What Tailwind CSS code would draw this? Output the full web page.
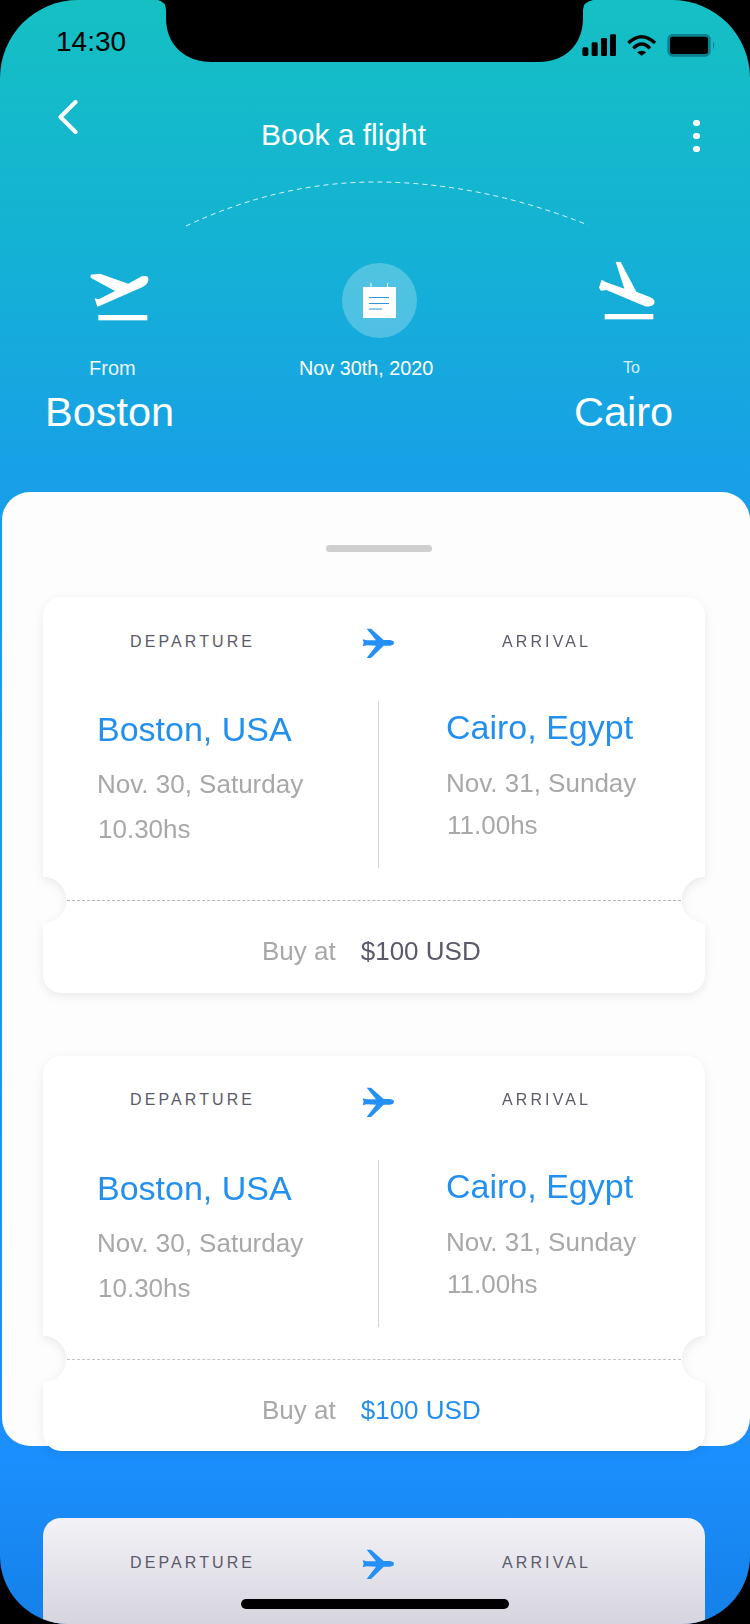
<!DOCTYPE html>
<html lang="en">

<head>
    <meta charset="UTF-8">
    <meta name="viewport" content="width=device-width, initial-scale=1.0">
    <title>Book a flight</title>
    <script src="https://cdn.jsdelivr.net/npm/@tailwindcss/browser@4"></script>
</head>

<body class="bg-black font-['Liberation_Sans',sans-serif] antialiased">

    <div class="relative w-[750px] h-[1624px] overflow-hidden rounded-t-[78px] rounded-b-[68px] bg-[linear-gradient(180deg,#15c0c3_0%,#14b2d4_15%,#189fe8_30%,#1b8ffd_90%,#1580e8_100%)]">

        <!-- notch -->
        <svg class="absolute top-0 left-0" width="750" height="64" viewBox="0 0 750 64">
            <path d="M158 0 Q166 2 166 10 L166 18 C166 45 185 62 212 62 L538 62 C565 62 583 45 583 18 L583 10 Q583 2 593 0 Z" fill="#000" />
        </svg>

        <!-- flight arc -->
        <svg class="absolute top-[178px] left-[180px]" width="412" height="52" viewBox="0 0 412 52" fill="none">
            <path d="M6 48 Q100 4 195 4 Q300 4 408 47" stroke="#fff" stroke-opacity="0.85" stroke-width="1" stroke-dasharray="5 4" />
        </svg>

        <header class="h-[492px]">
            <!-- status bar -->
            <div class="flex pt-[26px] pl-[56px] pr-[33px] h-[57px]">
                <span class="text-[28px] leading-[32px] text-black">14:30</span>
                <svg class="ml-auto mt-[6px]" width="137" height="25" viewBox="615 95 411 75">
                    <rect x="622" y="141" width="18" height="26" rx="5" fill="#000" />
                    <rect x="650" y="126" width="18" height="41" rx="4" fill="#000" />
                    <rect x="678" y="113" width="18" height="54" rx="4" fill="#000" />
                    <rect x="705" y="102" width="18" height="65" rx="4" fill="#000" />
                    <path d="M760 128 Q800 90 840 128" stroke="#000" stroke-width="10" fill="none" />
                    <path d="M775 144 Q800 118 825 144" stroke="#000" stroke-width="10" fill="none" />
                    <path d="M786 156 Q800 146 814 156 L800 166 Z" fill="#000" />
                    <rect x="881" y="105" width="122" height="60" rx="12" stroke="#0d7f8e" stroke-width="8" fill="#000" />
                    <path d="M1014 122 Q1022 135 1014 148 Z" fill="#0d7f8e" />
                </svg>
            </div>

            <!-- title row -->
            <div class="flex mt-[43px] pl-[58px] h-[52px]">
                <svg width="20" height="34" viewBox="0 0 20 34" fill="none">
                    <path d="M17.5 2 L2.5 17 L17.5 32" stroke="#fff" stroke-width="4" stroke-linecap="round" stroke-linejoin="round" />
                </svg>
                <h1 class="ml-[183px] mt-[18px] text-[30px] leading-[34px] text-white">Book a flight</h1>
                <div class="ml-[267px] mt-[20px] flex flex-col gap-[7px]">
                    <span class="block w-[7px] h-[7px] rounded-full bg-white"></span>
                    <span class="block w-[7px] h-[7px] rounded-full bg-white"></span>
                    <span class="block w-[7px] h-[7px] rounded-full bg-white"></span>
                </div>
            </div>

            <!-- route -->
            <div class="flex mt-[108px] pl-[45px] text-white">
                <div class="w-[254px] flex-none">
                    <svg class="ml-[45px] mt-[12px]" width="60" height="50" viewBox="90 95 180 150">
                        <path d="M92 103 L120 100 L205 130 L245 108 Q268 103 265 120 Q263 132 248 140 L120 196 L112 199 L104 174 L116 177 L165 152 L92 112 Z" fill="#fff" />
                        <rect x="115" y="224" width="147" height="16" fill="#fff" />
                    </svg>
                    <p class="ml-[44px] mt-[34px] text-[20px] leading-[24px] text-white/95">From</p>
                    <p class="mt-[9px] text-[41.5px] leading-[46px]">Boston</p>
                </div>
                <div class="w-[275px] flex-none">
                    <div class="ml-[43px] mt-[3px] w-[75px] h-[75px] rounded-full bg-white/25 flex items-center justify-center">
                        <svg width="35" height="37" viewBox="0 0 35 37">
                            <rect x="1" y="5" width="33" height="31" fill="#fff" />
                            <rect x="8.5" y="1" width="1" height="5" fill="#fff" />
                            <rect x="25" y="1" width="1" height="5" fill="#fff" />
                            <rect x="7" y="15" width="20" height="1" fill="#2b96dc" />
                            <rect x="7" y="21" width="20" height="1" fill="#2b96dc" />
                            <rect x="7" y="26.500" width="13" height="1" fill="#2b96dc" />
                        </svg>
                    </div>
                    <p class="mt-[18px] text-[19.8px] leading-[24px] whitespace-nowrap">Nov 30th, 2020</p>
                </div>
                <div class="flex-none">
                    <svg class="ml-[24px]" width="57" height="60" viewBox="175 60 171 180">
                        <path d="M228 65 L243 66 L290 155 L330 171 Q348 178 344 190 Q338 202 316 199 L200 150 L184 152 L178 143 L186 119 L198 126 L254 146 Z" fill="#fff" />
                        <rect x="195" y="222" width="146" height="16" fill="#fff" />
                    </svg>
                    <p class="ml-[49px] mt-[36px] text-[16px] leading-[24px] text-white/80">To</p>
                    <p class="mt-[9px] text-[41.5px] leading-[46px]">Cairo</p>
                </div>
            </div>
        </header>

        <!-- sheet -->
        <main class="ml-[2px] h-[954px] pt-[53px] rounded-[28px] bg-[#fdfdfd]">
            <div class="ml-[324px] mb-[45px] w-[106px] h-[7px] rounded-full bg-[#cfcfcf]"></div>

            <!-- ticket 1 -->
            <div class="ml-[41px] w-[662px] drop-shadow-[0_3px_5px_rgba(0,0,0,0.08)]">
                <article class="h-[396px] rounded-[18px] bg-white [mask-image:radial-gradient(circle_at_0_303px,transparent_23px,black_23.5px),radial-gradient(circle_at_100%_303px,transparent_23px,black_23.5px)] [mask-composite:intersect]">
                    <div class="flex h-[104px] pl-[87px] pt-[33px]">
                        <span class="w-[230px] text-[16px] leading-[24px] tracking-[3.1px] text-[#5b5a6b]">DEPARTURE</span>
                        <svg class="mt-[-3px]" width="35" height="32" viewBox="60 50 105 96">
                            <path d="M80 55 L93 55 L131 89 L150 89 Q162 91 162 97 Q162 104 150 106 L131 106 L93 143 L80 143 L108 106 L80 105 L68 108 L71 97 L68 87 L80 90 L108 90 Z" fill="#2490f5" />
                        </svg>
                        <span class="ml-[107px] text-[16px] leading-[24px] tracking-[3.1px] text-[#5b5a6b]">ARRIVAL</span>
                    </div>
                    <div class="flex h-[167px]">
                        <div class="w-[336px] pl-[54px] pt-[8px] border-r border-[#d4d4d4]">
                            <p class="text-[34px] leading-[40px] text-[#2490ee]">Boston, USA</p>
                            <p class="mt-[19px] text-[26px] leading-[32px] text-[#a8a8a8]">Nov. 30, Saturday</p>
                            <p class="mt-[13px] ml-[1px] text-[26px] leading-[32px] text-[#a8a8a8]">10.30hs</p>
                        </div>
                        <div class="pl-[67px] pt-[6px]">
                            <p class="text-[34px] leading-[40px] text-[#2490ee]">Cairo, Egypt</p>
                            <p class="mt-[20px] text-[26px] leading-[32px] text-[#a8a8a8]">Nov. 31, Sunday</p>
                            <p class="mt-[10px] ml-[1px] text-[26px] leading-[32px] text-[#a8a8a8]">11.00hs</p>
                        </div>
                    </div>
                    <div class="mt-[32px] mx-[24px] border-t border-dashed border-[#b5b5b5]"></div>
                    <div class="flex gap-[25px] mt-[34px] pl-[219px] text-[26px] leading-[32px]">
                        <span class="text-[#a8a8a8]">Buy at</span>
                        <span class="text-[#5b5a6b]">$100 USD</span>
                    </div>
                </article>
            </div>

            <!-- ticket 2 -->
            <div class="mt-[63px] ml-[41px] w-[662px] drop-shadow-[0_3px_5px_rgba(0,0,0,0.08)]">
                <article class="h-[395px] rounded-[18px] bg-white [mask-image:radial-gradient(circle_at_0_303px,transparent_23px,black_23.5px),radial-gradient(circle_at_100%_303px,transparent_23px,black_23.5px)] [mask-composite:intersect]">
                    <div class="flex h-[104px] pl-[87px] pt-[32px]">
                        <span class="w-[230px] text-[16px] leading-[24px] tracking-[3.1px] text-[#5b5a6b]">DEPARTURE</span>
                        <svg class="mt-[-2px]" width="35" height="32" viewBox="60 50 105 96">
                            <path d="M80 55 L93 55 L131 89 L150 89 Q162 91 162 97 Q162 104 150 106 L131 106 L93 143 L80 143 L108 106 L80 105 L68 108 L71 97 L68 87 L80 90 L108 90 Z" fill="#2490f5" />
                        </svg>
                        <span class="ml-[107px] text-[16px] leading-[24px] tracking-[3.1px] text-[#5b5a6b]">ARRIVAL</span>
                    </div>
                    <div class="flex h-[167px]">
                        <div class="w-[336px] pl-[54px] pt-[8px] border-r border-[#d4d4d4]">
                            <p class="text-[34px] leading-[40px] text-[#2490ee]">Boston, USA</p>
                            <p class="mt-[19px] text-[26px] leading-[32px] text-[#a8a8a8]">Nov. 30, Saturday</p>
                            <p class="mt-[13px] ml-[1px] text-[26px] leading-[32px] text-[#a8a8a8]">10.30hs</p>
                        </div>
                        <div class="pl-[67px] pt-[6px]">
                            <p class="text-[34px] leading-[40px] text-[#2490ee]">Cairo, Egypt</p>
                            <p class="mt-[20px] text-[26px] leading-[32px] text-[#a8a8a8]">Nov. 31, Sunday</p>
                            <p class="mt-[10px] ml-[1px] text-[26px] leading-[32px] text-[#a8a8a8]">11.00hs</p>
                        </div>
                    </div>
                    <div class="mt-[32px] mx-[24px] border-t border-dashed border-[#c4c4c4]"></div>
                    <div class="flex gap-[25px] mt-[34px] pl-[219px] text-[26px] leading-[32px]">
                        <span class="text-[#a8a8a8]">Buy at</span>
                        <span class="text-[#2490ee]">$100 USD</span>
                    </div>
                </article>
            </div>

            <!-- ticket 3, cut off by the screen -->
            <article class="mt-[67px] ml-[41px] w-[662px] h-[396px] rounded-[18px] bg-[linear-gradient(180deg,#f3f2f6_0%,#d6d5df_100%)] bg-[length:100%_106px] bg-no-repeat">
                <div class="flex h-[104px] pl-[87px] pt-[33px]">
                    <span class="w-[230px] text-[16px] leading-[24px] tracking-[3.1px] text-[#5b5a6b]">DEPARTURE</span>
                    <svg class="mt-[-3px]" width="35" height="32" viewBox="60 50 105 96">
                        <path d="M80 55 L93 55 L131 89 L150 89 Q162 91 162 97 Q162 104 150 106 L131 106 L93 143 L80 143 L108 106 L80 105 L68 108 L71 97 L68 87 L80 90 L108 90 Z" fill="#2490f5" />
                    </svg>
                    <span class="ml-[107px] text-[16px] leading-[24px] tracking-[3.1px] text-[#5b5a6b]">ARRIVAL</span>
                </div>
            </article>
        </main>

        <!-- home indicator -->
        <div class="absolute left-[241px] top-[1599px] w-[268px] h-[10px] rounded-full bg-black"></div>
    </div>

</body>

</html>
